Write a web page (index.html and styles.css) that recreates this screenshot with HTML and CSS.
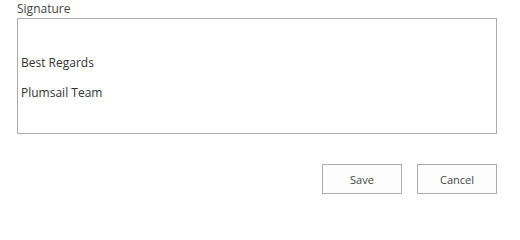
FILE: index.html
```html
<!DOCTYPE html>
<html>
<head>
<meta charset="utf-8">
<link rel="stylesheet" href="styles.css">
</head>
<body>
<div class="form">
  <div class="field">
    <div class="label">Signature</div>
    <div class="textbox">
      <p class="line empty">&nbsp;</p>
      <p class="line">Best Regards</p>
      <p class="line">Plumsail Team</p>
    </div>
  </div>
  <div class="actions">
    <button class="btn">Save</button>
    <button class="btn">Cancel</button>
  </div>
</div>
</body>
</html>
```

FILE: styles.css
```css
html, body {
  margin: 0;
  padding: 0;
  background: #ffffff;
}
body {
  font-family: "Open Sans", "Noto Sans", sans-serif;
  color: #444444;
  width: 520px;
  height: 213px;
}
.form {
  padding: 0 23px 0 17px;
}
.field {
  display: flex;
  flex-direction: column;
}
.label {
  font-size: 12px;
  line-height: 18px;
  color: #444444;
}
.textbox {
  box-sizing: border-box;
  height: 116px;
  border: 1px solid #ababab;
  padding: 0 0 0 3px;
}
.line {
  margin: 0;
  font-size: 12px;
  line-height: 30px;
  color: #333333;
}
.line.empty {
  line-height: 29px;
}
.actions {
  display: flex;
  justify-content: flex-end;
  gap: 15px;
  margin-top: 30px;
}
.btn {
  box-sizing: border-box;
  width: 80px;
  height: 30px;
  border: 1px solid #ababab;
  background: #fdfdfd;
  font-family: "Open Sans", "Noto Sans", sans-serif;
  font-size: 11px;
  color: #444444;
  padding: 0;
}
```
